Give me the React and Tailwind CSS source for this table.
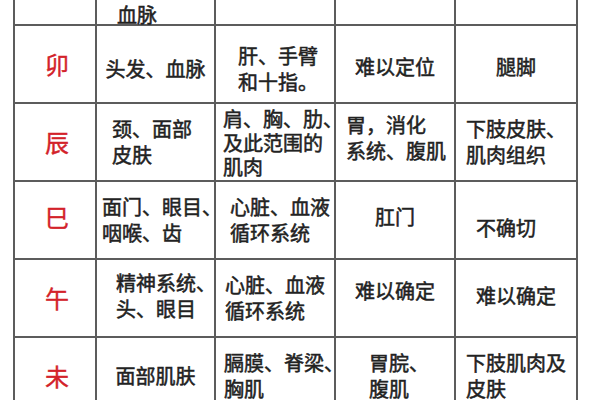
import React from 'react';

// each row: red branch + 4 body cells. cell: { t: lines, c: extra classes }
const rows = [
  {
    b: '寅',
    cells: [
      { t: ['手臂、', '血脉'], c: 'justify-start pl-[20px] pt-[32px]' },
      { t: ['肩、背'], c: 'justify-center pb-[44px]' },
      { t: ['难以定位'], c: 'justify-center pb-[44px]' },
      { t: ['手'], c: 'justify-center pb-[44px]' },
    ],
  },
  {
    b: '卯',
    cells: [
      { t: ['头发、血脉'], c: 'justify-center pt-[10px]' },
      { t: ['肝、手臂', '和十指。'], c: 'justify-start pl-[22px] pt-[9px]' },
      { t: ['难以定位'], c: 'justify-center pt-[6px]' },
      { t: ['腿脚'], c: 'justify-center pt-[6px]' },
    ],
  },
  {
    b: '辰',
    cells: [
      { t: ['颈、面部', '皮肤'], c: 'justify-start pl-[15px]' },
      { t: ['肩、胸、肋、', '及此范围的', '肌肉'], c: 'justify-start pl-[7px] pt-[2px]', lh: 'leading-[24px]' },
      { t: ['胃，消化', '系统、腹肌'], c: 'justify-start pl-[10px] pb-[8px]' },
      { t: ['下肢皮肤、', '肌肉组织'], c: 'justify-start pl-[10px]' },
    ],
  },
  {
    b: '巳',
    bc: 'pb-[6px]',
    cells: [
      { t: ['面门、眼目、', '咽喉、齿'], c: 'justify-start pl-[5px]' },
      { t: ['心脏、血液', '循环系统'], c: 'justify-start pl-[14px]' },
      { t: ['肛门'], c: 'justify-center pb-[7px]' },
      { t: ['不确切'], c: 'justify-center pr-[20px] pt-[15px]' },
    ],
  },
  {
    b: '午',
    cells: [
      { t: ['精神系统、', '头、眼目'], c: 'justify-start pl-[19px] pb-[5px]' },
      { t: ['心脏、血液', '循环系统'], c: 'justify-start pl-[9px]' },
      { t: ['难以确定'], c: 'justify-center pb-[14px]' },
      { t: ['难以确定'], c: 'justify-center pb-[4px]' },
    ],
  },
  {
    b: '未',
    cells: [
      { t: ['面部肌肤'], c: 'justify-center' },
      { t: ['膈膜、脊梁、', '胸肌'], c: 'justify-start pl-[8px]' },
      { t: ['胃脘、', '腹肌'], c: 'justify-start pl-[33px]' },
      { t: ['下肢肌肉及', '皮肤'], c: 'justify-start pl-[10px]' },
    ],
  },
];

const font = { fontFamily: '"Noto Sans CJK SC", "Noto Sans", sans-serif' };

export default function App() {
  return (
    <div className="w-[600px] h-[400px] overflow-hidden bg-white" style={font}>
      <div className="ml-[13px] -mt-[52px] w-[565px] grid grid-cols-[82px_119px_120px_120px_122px] auto-rows-[78px] border-l-2 border-[#5c5c5c]">
        {rows.map((r) => (
          <React.Fragment key={r.b}>
            <div className={`flex items-center justify-center pl-[4px] border-r-2 border-b-2 border-[#5c5c5c] text-[24px] text-[#d3222a] [-webkit-text-stroke:0.4px_#d3222a] ${r.bc || ''}`}>
              {r.b}
            </div>
            {r.cells.map((cell, i) => (
              <div
                key={i}
                className={`flex items-center border-r-2 border-b-2 border-[#5c5c5c] text-[20px] text-[#222] [-webkit-text-stroke:0.5px_#222] whitespace-nowrap ${cell.lh || 'leading-[26px]'} ${cell.c}`}
              >
                <div className="text-left">
                  {cell.t.map((line, j) => (
                    <div key={j}>{line}</div>
                  ))}
                </div>
              </div>
            ))}
          </React.Fragment>
        ))}
      </div>
    </div>
  );
}
